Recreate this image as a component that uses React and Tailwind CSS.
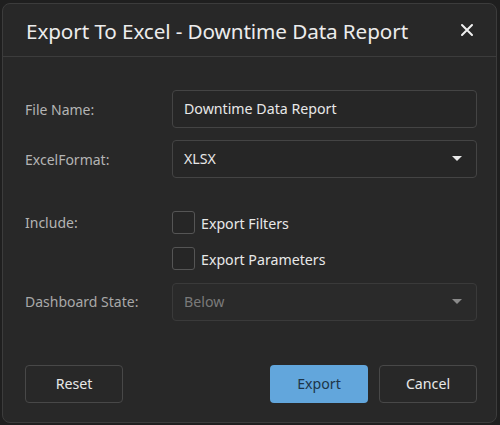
export default function App() {
  const font = { fontFamily: '"Noto Sans", "Open Sans", sans-serif' };
  return (
    <div className="w-[500px] h-[425px] bg-[#1f1f1f] pt-[3px] pl-[2px]" style={font}>
      <div className="w-[495px] h-[420px] bg-[#282828] border border-[#3c3c3c] rounded-[8px] flex flex-col">
        <div className="h-[53px] flex items-center justify-between pl-[23px] pr-[22px] pt-[3px] border-b border-[#3c3c3c]">
          <span className="text-[20.7px] text-[#ececec] tracking-[-0.1px]">Export To Excel - Downtime Data Report</span>
          <svg width="14" height="14" viewBox="0 0 14 14" className="text-[#f0f0f0] mb-[3px]">
            <path d="M2 2 L12 12 M12 2 L2 12" stroke="currentColor" strokeWidth="2" strokeLinecap="round" />
          </svg>
        </div>
        <div className="flex-1 flex flex-col pl-[22px] pr-[19px] pt-[33px]">
          <div className="flex items-center h-[38px]">
            <span className="w-[147px] text-[14px] text-[#b4b4b4]">File Name:</span>
            <div className="flex-1 h-[38px] border border-[#444] rounded-[4px] bg-[#262626] flex items-center px-[11px] text-[14.2px] text-[#e8e8e8]">
              Downtime Data Report
            </div>
          </div>
          <div className="flex items-center h-[38px] mt-[12px]">
            <span className="w-[147px] text-[14px] text-[#b4b4b4]">ExcelFormat:</span>
            <div className="flex-1 h-[38px] border border-[#444] rounded-[4px] bg-[#262626] flex items-center justify-between pl-[11px] pr-[14px] text-[14.2px] text-[#e8e8e8]">
              <span>XLSX</span>
              <svg width="10" height="6" viewBox="0 0 10 6"><path d="M0 0 L10 0 L5 5 Z" fill="#e8e8e8" /></svg>
            </div>
          </div>
          <div className="flex mt-[33px]">
            <span className="w-[147px] text-[14px] text-[#b4b4b4] pt-[1px]">Include:</span>
            <div className="flex flex-col gap-[13px]">
              <div className="flex items-center gap-[6px]">
                <div className="w-[23px] h-[23px] border border-[#555] rounded-[3px] bg-[#262626]" />
                <span className="text-[14.2px] text-[#e8e8e8] pt-[2px]">Export Filters</span>
              </div>
              <div className="flex items-center gap-[6px]">
                <div className="w-[23px] h-[23px] border border-[#555] rounded-[3px] bg-[#262626]" />
                <span className="text-[14.2px] text-[#e8e8e8] pt-[2px]">Export Parameters</span>
              </div>
            </div>
          </div>
          <div className="flex items-center h-[38px] mt-[12px]">
            <span className="w-[147px] text-[14px] text-[#a8a8a8]">Dashboard State:</span>
            <div className="flex-1 h-[38px] border border-[#3a3a3a] rounded-[4px] bg-[#2a2a2a] flex items-center justify-between pl-[11px] pr-[14px] text-[14.2px] text-[#7a7a7a]">
              <span>Below</span>
              <svg width="10" height="6" viewBox="0 0 10 6"><path d="M0 0 L10 0 L5 5 Z" fill="#8a8a8a" /></svg>
            </div>
          </div>
          <div className="flex items-center justify-between mt-[44px]">
            <button className="w-[98px] h-[38px] border border-[#484848] rounded-[4px] text-[14.2px] text-[#e8e8e8] bg-[#282828]">Reset</button>
            <div className="flex gap-[11px]">
              <button className="w-[98px] h-[38px] rounded-[4px] text-[14.2px] text-[#1d3549] bg-[#62a6dc]">Export</button>
              <button className="w-[98px] h-[38px] border border-[#484848] rounded-[4px] text-[14.2px] text-[#e8e8e8] bg-[#282828]">Cancel</button>
            </div>
          </div>
        </div>
      </div>
    </div>
  );
}
